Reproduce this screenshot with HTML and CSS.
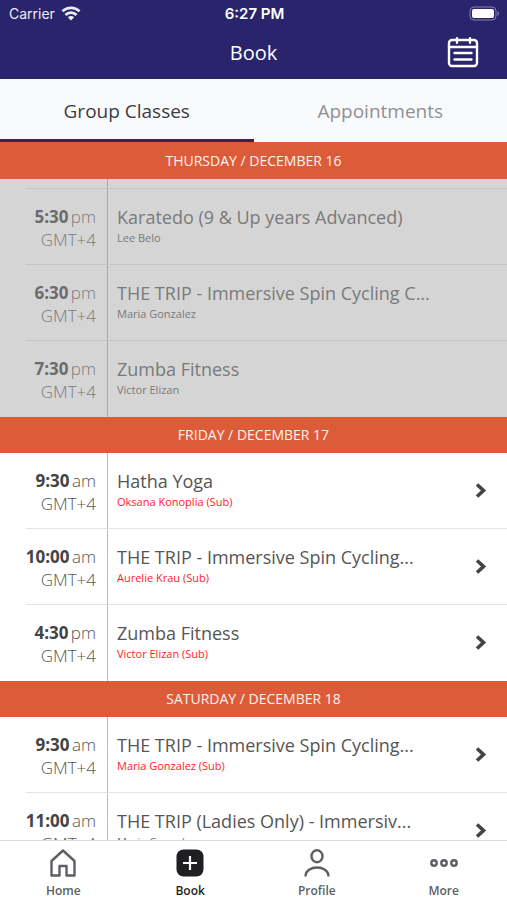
FILE: index.html
```html
<!DOCTYPE html>
<html lang="en">
<head>
<meta charset="utf-8">
<meta name="viewport" content="width=device-width, initial-scale=1">
<title>Book</title>
<link rel="stylesheet" href="styles.css">
</head>
<body>
<svg width="0" height="0" class="defs" aria-hidden="true">
  <symbol id="chevron" viewBox="0 0 12 18"><path d="M2 2.500l6.500 6L2 14.500" fill="none" stroke="currentColor" stroke-width="3.600"/></symbol>
</svg>
<div class="app">
  <header class="top">
    <div class="status">
      <div class="carrier">
        <span>Carrier</span>
        <svg width="20" height="16" viewBox="0 0 20 16" aria-hidden="true">
          <g fill="none" stroke="currentColor" stroke-width="2.800">
            <path d="M1.500 5.300C6.200 .600 13.800 .600 18.500 5.300"/>
            <path d="M4.500 8.900c3-2.900 8-2.900 11 0"/>
          </g>
          <path d="M10 14.500l-3.200-3.300c1.800-1.600 4.600-1.600 6.400 0z" fill="currentColor"/>
        </svg>
      </div>
      <span class="clock">6:27 PM</span>
      <svg class="battery" width="31" height="15" viewBox="0 0 31 15" aria-hidden="true">
        <rect x="1" y="1" width="26" height="13" rx="4" fill="none" stroke="#8582b0"/>
        <rect x="3" y="3" width="22" height="9" rx="2" fill="#fff"/>
        <path d="M28.500 5v5c2-.800 2-4.200 0-5z" fill="#8582b0"/>
      </svg>
    </div>
    <div class="title-bar">
      <h1>Book</h1>
      <button class="calendar" type="button" aria-label="Calendar">
        <svg width="32" height="32" viewBox="0 0 32 32" fill="none" stroke="currentColor" stroke-width="2.400" stroke-linecap="round">
          <rect x="2" y="3" width="28" height="26" rx="3"/>
          <path d="M2 10h28M10 1.200v4.500M23 1.200v4.500M7.500 16h17M7.500 22.500h17"/>
        </svg>
      </button>
    </div>
  </header>

  <div class="tabs" role="tablist">
    <button class="tab active" type="button" role="tab" aria-selected="true">Group Classes</button>
    <button class="tab" type="button" role="tab" aria-selected="false">Appointments</button>
  </div>

  <main class="schedule">
    <section class="past">
      <h2>THURSDAY / DECEMBER 16</h2>
      <ul>
        <li class="sliver"></li>
        <li><div class="time"><p><b>5:30</b> pm</p><p>GMT+4</p></div><div class="info"><h3>Karatedo (9 &amp; Up years Advanced)</h3><p>Lee Belo</p></div></li>
        <li><div class="time"><p><b>6:30</b> pm</p><p>GMT+4</p></div><div class="info"><h3>THE TRIP - Immersive Spin Cycling C...</h3><p>Maria Gonzalez</p></div></li>
        <li><div class="time"><p><b>7:30</b> pm</p><p>GMT+4</p></div><div class="info"><h3>Zumba Fitness</h3><p>Victor Elizan</p></div></li>
      </ul>
    </section>
    <section>
      <h2>FRIDAY / DECEMBER 17</h2>
      <ul>
        <li><div class="time"><p><b>9:30</b> am</p><p>GMT+4</p></div><a href="#" class="info"><h3>Hatha Yoga</h3><p class="sub">Oksana Konoplia (Sub)</p></a><svg class="chevron"><use href="#chevron"/></svg></li>
        <li><div class="time"><p><b>10:00</b> am</p><p>GMT+4</p></div><a href="#" class="info"><h3>THE TRIP - Immersive Spin Cycling...</h3><p class="sub">Aurelie Krau (Sub)</p></a><svg class="chevron"><use href="#chevron"/></svg></li>
        <li><div class="time"><p><b>4:30</b> pm</p><p>GMT+4</p></div><a href="#" class="info"><h3>Zumba Fitness</h3><p class="sub">Victor Elizan (Sub)</p></a><svg class="chevron"><use href="#chevron"/></svg></li>
      </ul>
    </section>
    <section>
      <h2>SATURDAY / DECEMBER 18</h2>
      <ul>
        <li><div class="time"><p><b>9:30</b> am</p><p>GMT+4</p></div><a href="#" class="info"><h3>THE TRIP - Immersive Spin Cycling...</h3><p class="sub">Maria Gonzalez (Sub)</p></a><svg class="chevron"><use href="#chevron"/></svg></li>
        <li><div class="time"><p><b>11:00</b> am</p><p>GMT+4</p></div><a href="#" class="info"><h3>THE TRIP (Ladies Only) - Immersiv...</h3><p>Maria Gonzalez</p></a><svg class="chevron"><use href="#chevron"/></svg></li>
      </ul>
    </section>
  </main>

  <nav class="bottom">
    <a href="#">
      <svg width="28" height="28" viewBox="0 0 28 28" fill="none" stroke="currentColor" stroke-width="2.400" stroke-linejoin="round"><path d="M2.500 12L14 1.500 25.500 12v14.500H17.500V17h-7v9.500H2.500z"/></svg>
      <span>Home</span>
    </a>
    <a href="#" class="current" aria-current="page">
      <svg width="28" height="28" viewBox="0 0 28 28"><rect x=".500" y=".500" width="27" height="27" rx="7" fill="currentColor"/><path d="M14 7v14M7 14h14" stroke="#fff" stroke-width="2.200"/></svg>
      <span>Book</span>
    </a>
    <a href="#">
      <svg width="28" height="28" viewBox="0 0 28 28" fill="none" stroke="currentColor" stroke-width="2.400"><ellipse cx="14" cy="7.300" rx="5.500" ry="6"/><path d="M2.500 27.500c0-12 23-12 23 0"/></svg>
      <span>Profile</span>
    </a>
    <a href="#">
      <svg width="28" height="28" viewBox="0 0 28 28" fill="none" stroke="currentColor" stroke-width="2.400"><circle cx="4" cy="14" r="2.700"/><circle cx="14" cy="14" r="2.700"/><circle cx="24" cy="14" r="2.700"/></svg>
      <span>More</span>
    </a>
  </nav>
</div>
</body>
</html>
```

FILE: styles.css
```css
*, *::before, *::after { box-sizing: border-box; }
body, h1, h2, h3, p, ul { margin: 0; padding: 0; font-weight: 400; }
body { font-family: "Open Sans", sans-serif; background: #fff; color: #555; }
ul { list-style: none; }
a { color: inherit; text-decoration: none; }
button { border: 0; padding: 0; background: none; font: inherit; color: inherit; }
.defs { position: absolute; }

.app { display: flex; flex-direction: column; height: 100vh; }

.top { background: #2a246c; color: #fff; }
.status {
  display: grid;
  grid-template-columns: 1fr auto 1fr;
  align-items: center;
  height: 27px;
  padding: 0 7px 0 9px;
  font: 14px/27px Inter, sans-serif;
}
.carrier { display: flex; align-items: center; gap: 6px; color: #eeedf6; }
.clock { font-size: 15px; font-weight: 600; }
.battery { justify-self: end; }
.title-bar {
  display: grid;
  grid-template-columns: 1fr auto 1fr;
  align-items: center;
  height: 52px;
  padding: 0 28px;
}
.title-bar h1 { grid-column: 2; font-size: 20px; line-height: 52px; }
.calendar { justify-self: end; display: flex; }

.tabs { display: flex; background: #f9fafc; }
.tab {
  flex: 1;
  height: 63px;
  padding-top: 4px;
  border-bottom: 3px solid transparent;
  font-size: 19px;
  color: #909094;
}
.tab.active { color: #3c3c40; border-color: #2a246c; }

.schedule { flex: 1; min-height: 0; overflow: hidden; }
h2 {
  height: 36px;
  background: #dc5c3a;
  color: #fff3ee;
  font-size: 14px;
  line-height: 36px;
  text-align: center;
}
.past h2 { height: 37px; line-height: 37px; }
li { display: flex; height: 76px; position: relative; }
li + li::before {
  content: "";
  position: absolute;
  top: -1px;
  left: 26px;
  right: 0;
  border-top: 1px solid #e2e2e2;
}
.sliver { height: 10px; }
.sliver::after, .time { border-right: 1px solid #bbb; }
.sliver::after { content: ""; width: 108px; }
.time {
  flex: none;
  width: 108px;
  padding: 16px 11px 0 0;
  text-align: right;
  font-size: 17px;
  line-height: 23px;
  font-weight: 300;
  color: #555;
  white-space: nowrap;
}
.time p { font-weight: 300; }
.time b { font-weight: 700; color: #444; margin-right: -2px; }
.info { flex: 1; min-width: 0; padding: 15px 0 0 9px; }
.info h3 { font-size: 18px; line-height: 26px; white-space: nowrap; }
.info p { font-size: 11px; line-height: 16px; color: #777; }
.info .sub { color: #ff1a28; }
.chevron { flex: none; align-self: center; width: 12px; height: 18px; margin-right: 20px; color: #444; }

.past ul { background: #d5d5d5; }
.past li + li::before { border-color: #c4c4c4; }
.past .sliver::after, .past .time { border-color: #a8a8a8; }
.past .time, .past h3, .past .info p { color: #7a7a7a; }
.past b { color: #6c6c6c; }

.bottom { display: flex; height: 60px; border-top: 1px solid #dcdcdc; background: #fff; }
.bottom a {
  flex: 1;
  display: flex;
  flex-direction: column;
  align-items: center;
  gap: 6px;
  padding-top: 8px;
  font-size: 12px;
  line-height: 16px;
  font-weight: 600;
  color: #5c5f63;
}
.bottom .current { color: #1e1f22; }
```
